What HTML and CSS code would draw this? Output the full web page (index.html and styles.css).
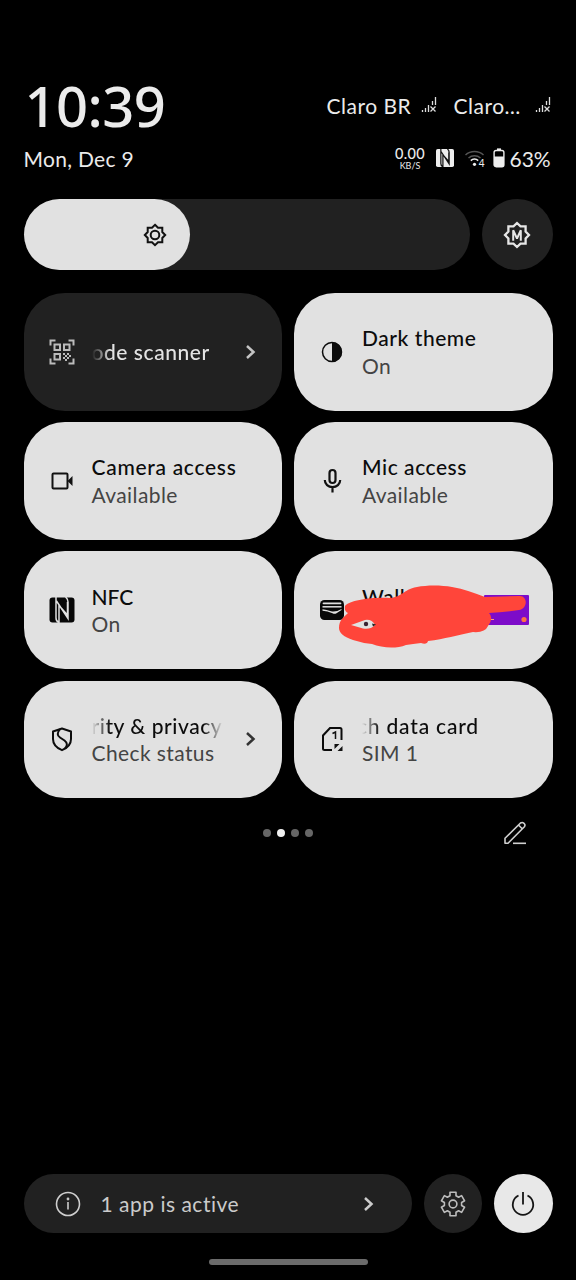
FILE: index.html
```html
<!DOCTYPE html>
<html lang="en">
<head>
<meta charset="utf-8">
<title>Quick settings</title>
<link rel="stylesheet" href="styles.css">
</head>
<body>
<main class="panel">
  <header class="status">
    <div class="status-top">
      <div class="clock">10:39</div>
      <div class="carriers">
        <span class="carrier">Claro BR</span>
        <svg class="signal" width="16" height="18" viewBox="0 0 16 18"><path d="M1.500 14v2M4.500 12v4M7.500 9v7M11.500 5v4M14.500 1v8" stroke="#ddd" stroke-width="1.300"/><path d="M9.500 10.500l5 5M14.500 10.500l-5 5" stroke="#ddd" stroke-width="1.300"/></svg>
        <span class="carrier carrier-second">Claro…</span>
        <svg class="signal signal-second" width="16" height="18" viewBox="0 0 16 18"><path d="M1.500 14v2M4.500 12v4M7.500 9v7M11.500 5v4M14.500 1v8" stroke="#ddd" stroke-width="1.300"/><path d="M9.500 10.500l5 5M14.500 10.500l-5 5" stroke="#ddd" stroke-width="1.300"/></svg>
      </div>
    </div>
    <div class="status-bottom">
      <div class="date">Mon, Dec 9</div>
      <div class="indicators">
        <div class="speed"><span class="rate">0.00</span><span class="unit">KB/S</span></div>
        <svg class="ind-nfc" width="18" height="18" viewBox="0 0 26 26"><rect width="26" height="26" rx="2.500" fill="#eee"/><path d="M7 0v21q0 3.500 3 4.500V8.500l8.500 9.500V5M7.500 4l11.500 17.500V5q0-3-2.500-5" fill="none" stroke="#111" stroke-width="1.800"/></svg>
        <svg class="ind-wifi" width="22" height="18" viewBox="0 0 22 18"><path d="M1.500 6a13.500 13.500 0 0 1 18 0M4.500 9a9 9 0 0 1 12 0" fill="none" stroke="#555" stroke-width="1.500"/><path d="M6.800 11.600a5.500 5.500 0 0 1 7.400 0" fill="none" stroke="#eee" stroke-width="1.600"/><circle cx="10.500" cy="15.300" r="1.600" fill="#eee"/><text class="wifi-gen" x="14.700" y="17.500">4</text></svg>
        <svg class="ind-battery" width="12" height="20" viewBox="0 0 12 20"><path d="M4 1.200h4" stroke="#eee" stroke-width="1.600"/><rect x="1.100" y="2.500" width="9.800" height="16.200" rx="2" fill="none" stroke="#eee" stroke-width="1.400"/><path d="M1 8.500h10V17q0 2-2 2H3q-2 0-2-2z" fill="#eee"/></svg>
        <span class="percent">63%</span>
      </div>
    </div>
  </header>

  <section class="brightness">
    <div class="slider">
      <div class="slider-fill">
        <svg width="24" height="24" viewBox="-12 -12 24 24" fill="none" stroke="#111" stroke-width="2"><path d="M0-10.200 3-7.300H7.300V-3L10.200 0 7.300 3V7.300H3L0 10.200-3 7.300H-7.300V3L-10.200 0-7.300-3V-7.300H-3Z"/><circle r="4.300"/></svg>
      </div>
    </div>
    <div class="mode">
      <svg width="28" height="28" viewBox="-14 -14 28 28" fill="none" stroke="#e6e6e6" stroke-width="2.300"><path d="M0-12 3.500-8.600H8.600V-3.500L12 0 8.600 3.500V8.600H3.500L0 12-3.500 8.600H-8.600V3.500L-12 0-8.600-3.500V-8.600H-3.500Z"/><path d="M-3.800 5.700V-4.800L0 3.500 3.800-4.800V5.700" stroke-width="2" stroke-linejoin="bevel"/></svg>
    </div>
  </section>

  <section class="tiles">
    <article class="tile tile-off">
      <svg class="icon" viewBox="0 0 26 26" fill="none" stroke="#bcbcbc" stroke-width="2"><path d="M1.500 6.500v-5h5M19.500 1.500h5v5M24.500 19.500v5h-5M6.500 24.500h-5v-5"/><path d="M5.500 5.500h5.500v5.500H5.500zM15 5.500h5.500v5.500H15zM5.500 15h5.500v5.500H5.500z" stroke-width="2"/><path d="M14 15h2m2 0h2m-4 2h2m2 0h2m-8 2h2m2 0h2m-4 2h2" stroke-width="1.800"/></svg>
      <div class="label"><div class="title fade-start">ode scanner</div></div>
      <svg class="chevron" viewBox="0 0 12 16"><path d="M2 2l6.500 6L2 14" fill="none" stroke="#c4c4c4" stroke-width="2.500"/></svg>
    </article>
    <article class="tile">
      <svg class="icon" viewBox="0 0 26 26"><circle cx="13" cy="13" r="9.500" fill="none" stroke="#0c0c0c" stroke-width="1.500"/><path d="M13 3a10 10 0 0 1 0 20z" fill="#0c0c0c"/></svg>
      <div class="label"><div class="title">Dark theme</div><div class="sub">On</div></div>
    </article>
    <article class="tile">
      <svg class="icon" viewBox="0 0 26 26"><rect x="3.500" y="5.500" width="15" height="15" rx="1" fill="none" stroke="#111" stroke-width="2"/><path d="M18.500 13 23.500 8v10z" fill="#111"/></svg>
      <div class="label"><div class="title title-wide">Camera access</div><div class="sub">Available</div></div>
    </article>
    <article class="tile">
      <svg class="icon" viewBox="0 0 26 26" fill="none" stroke="#111" stroke-width="2.200"><rect x="10.500" y="2" width="6" height="13" rx="3"/><path d="M5.800 12a7.700 7.200 0 0 0 15.400 0M13.500 19.500v5"/></svg>
      <div class="label"><div class="title">Mic access</div><div class="sub">Available</div></div>
    </article>
    <article class="tile">
      <svg class="icon" viewBox="0 0 26 26"><rect x=".5" y=".5" width="25" height="25" rx="3" fill="#080808"/><path d="M7 0v21q0 3.500 3 4.500V8.500l8.500 9.500V5M7.500 4l11.500 17.500V5q0-3-2.500-5" fill="none" stroke="#e1e1e1" stroke-width="1.500"/></svg>
      <div class="label"><div class="title title-tight">NFC</div><div class="sub">On</div></div>
    </article>
    <article class="tile wallet">
      <svg class="icon" viewBox="0 0 26 26"><rect x="1" y="3" width="24" height="20" rx="4.500" fill="#080808"/><path d="M4.500 6.300h17" stroke="#e1e1e1" stroke-width="1.800" stroke-linecap="round"/><path d="M3.500 9.800h19" stroke="#e1e1e1" stroke-width="1.500"/><path d="M3.500 12.300q4 .5 8.500 2 5 1 10.500-2.300v1l-5 3.200q-2 1-4 0-5-2.500-10-2.500z" fill="#e1e1e1"/></svg>
      <div class="label"><div class="title">Wallet</div><div class="sub">&nbsp;</div></div>
      <svg class="scribble" width="200" height="70" viewBox="335 580 200 70"><rect x="484" y="595" width="45" height="30" rx="1" fill="#7d0cc9"/><circle cx="524" cy="619.500" r="2.600" fill="#ff7043"/><path d="M489 619.500h5" stroke="#ff9b78"/><path d="M345 606C350 600 372 597 390 598C403 597 402 590 417 587C427 585 441 585 452 587C464 589 474 593 485 597L519 596C528 595 528 609 519 610Q505 612 489 613Q494 618 488 626Q485 633 473 632C457 635 445 639 428 641Q427 645 421 643Q413 644 406 645C396 649 382 648 372 644Q362 643 353 640C344 637 339 633 339 628C339 620 344 617 348 613Q344 611 345 606Z" fill="#ff453a"/><path d="M351 625 365 620q7-1 10 5-5 5-12 3.500z" fill="#e1e1e1"/><circle cx="366" cy="624" r="2.200" fill="#392333"/><path d="M372 623.500l4 1-3 2" fill="#222"/></svg>
    </article>
    <article class="tile">
      <svg class="icon" viewBox="0 0 26 26" fill="none" stroke="#0c0c0c" stroke-width="2" stroke-linejoin="round"><path d="M13 2.500 22 5.500V13q0 7.500-9 11.200Q4 20.500 4 13V5.500Z"/><path d="M11 3.200Q6.500 8.500 11 11.500l4.500 3Q20 18 16 22.500"/></svg>
      <div class="label"><div class="title fade-both">rity &amp; privacy</div><div class="sub">Check status</div></div>
      <svg class="chevron" viewBox="0 0 12 16"><path d="M2 2l6.500 6L2 14" fill="none" stroke="#333" stroke-width="2.500"/></svg>
    </article>
    <article class="tile">
      <svg class="icon" viewBox="0 0 26 26"><path d="M13 24H5.500Q4 24 4 22.500V9.500L11 2h10q1.500 0 1.500 1.500V14" fill="none" stroke="#0c0c0c" stroke-width="2"/><path d="M13.500 7.500 16.500 6v7" fill="none" stroke="#111" stroke-width="1.500"/><path d="M15.500 18h5l-5 5zM23.500 20v5h-5z" fill="#111"/></svg>
      <div class="label"><div class="title fade-start"><span class="scrolled">ch data card</span></div><div class="sub">SIM 1</div></div>
    </article>
  </section>

  <nav class="pager">
    <span class="dots"><i class="dot"></i><i class="dot dot-on"></i><i class="dot"></i><i class="dot"></i></span>
    <svg class="edit" width="24" height="24" viewBox="0 0 24 24" fill="none" stroke="#d0d0d0" stroke-width="1.600" stroke-linejoin="round"><path d="M2 22.300v-5L17.500 2q1.800-1.200 3.500.3t.4 3.400L6 21.300 5 22.300ZM15.500 4l4.200 4.200"/><path d="M10 22.300h13"/></svg>
  </nav>

  <footer class="footer">
    <div class="active-apps">
      <svg width="26" height="26" viewBox="0 0 26 26" fill="none" stroke="#cfcfcf" stroke-width="1.600"><circle cx="13" cy="13" r="11.500"/><path d="M13 11v7.500"/><circle cx="13" cy="8" r=".6"/></svg>
      <span class="active-text">1 app is active</span>
      <svg class="chevron" viewBox="0 0 12 16"><path d="M2 2l6.500 6L2 14" fill="none" stroke="#ccc" stroke-width="2.500"/></svg>
    </div>
    <div class="round">
      <svg width="28" height="28" viewBox="-14 -14 28 28" fill="none" stroke="#bdbdbd" stroke-width="1.600" stroke-linejoin="round"><path d="M-3-8.200V-11.700H3V-8.200L5.600-6.700 8.600-8.400 11.600-3.200 8.600-1.500V1.500L11.600 3.200 8.600 8.400 5.600 6.700 3 8.200V11.700H-3V8.200L-5.600 6.700-8.600 8.400-11.600 3.200-8.600 1.500V-1.500L-11.600-3.200-8.600-8.400-5.600-6.700Z"/><circle r="3.900"/></svg>
    </div>
    <div class="round round-light">
      <svg width="26" height="26" viewBox="0 0 26 26" fill="none" stroke="#151515" stroke-width="1.800"><path d="M8.500 4.500a10.200 10.200 0 1 0 9 0M13 1v12.500"/></svg>
    </div>
  </footer>
  <div class="home-bar"></div>
</main>
</body>
</html>
```
FILE: styles.css
```css
* { box-sizing: border-box; }
body {
  margin: 0;
  background: #000;
  color: #ebebeb;
  font-family: Lato, "Noto Sans", sans-serif;
}
svg { display: block; flex: none; }
.panel {
  width: 576px;
  height: 1280px;
  padding: 75px 23.500px 0;
  display: flex;
  flex-direction: column;
  overflow: hidden;
}
.status { height: 124px; }
.status-top {
  height: 62px;
  display: flex;
  justify-content: space-between;
}
.clock {
  font: 500 56px/60px "Noto Sans", sans-serif;
  letter-spacing: -0.500px;
  padding-left: 1px;
}
.carriers {
  display: flex;
  height: 60px;
  align-items: center;
}
.carrier {
  font-size: 21px;
  letter-spacing: 0.500px;
  width: 86px;
  margin-right: 8px;
  white-space: nowrap;
}
.carrier-second { width: 72px; margin: 0 9px 0 17px; }
.signal-second { margin-right: 2px; }
.status-bottom {
  height: 42px;
  display: flex;
  justify-content: space-between;
  align-items: center;
}
.date { font-size: 21px; letter-spacing: 0.300px; }
.indicators { display: flex; align-items: center; }
.speed {
  display: flex;
  flex-direction: column;
  align-items: center;
  width: 31px;
  margin-right: 10px;
}
.rate { font-size: 14.500px; line-height: 14px; letter-spacing: 0.300px; font-weight: 500; }
.unit { font-size: 9px; line-height: 9px; }
.ind-nfc { margin-right: 10px; }
.ind-wifi { margin-right: 7px; }
.ind-battery { margin-right: 5px; }
.wifi-gen { font: 10px "Noto Sans", sans-serif; fill: #eee; }
.percent { font-size: 21px; width: 43px; }

.brightness { display: flex; gap: 12px; height: 94px; }
.slider {
  width: 446.500px;
  height: 71px;
  border-radius: 36px;
  background: #212121;
}
.slider-fill {
  width: 166px;
  height: 71px;
  border-radius: 36px;
  background: #e1e1e1;
  display: flex;
  align-items: center;
  justify-content: flex-end;
  padding-right: 23px;
}
.mode {
  width: 70.500px;
  height: 71px;
  border-radius: 50%;
  background: #212121;
  display: flex;
  align-items: center;
  justify-content: center;
}

.tiles {
  display: grid;
  grid-template-columns: 258.500px 258.500px;
  grid-auto-rows: 117.500px;
  gap: 11.700px 12px;
}
.tile {
  position: relative;
  display: flex;
  align-items: center;
  padding: 0 25px;
  border-radius: 41px;
  background: #e1e1e1;
  color: #0c0c0c;
}
.tile-off { background: #212121; color: #e3e3e3; }
.icon { width: 26px; height: 26px; margin-right: 17px; }
.label { flex: 1; min-width: 0; }
.title, .sub {
  font-size: 21px;
  line-height: 27.500px;
  white-space: nowrap;
}
.title { font-weight: 500; letter-spacing: 0.550px; }
.title-wide { letter-spacing: 0.700px; }
.title-tight { letter-spacing: 0; }
.sub { color: #444; letter-spacing: 0.400px; }
.fade-start, .fade-both { width: 131px; }
.fade-start { -webkit-mask-image: linear-gradient(90deg, transparent, #000 18px); mask-image: linear-gradient(90deg, transparent, #000 18px); }
.fade-both { -webkit-mask-image: linear-gradient(90deg, transparent, #000 18px, #000 111px, transparent); mask-image: linear-gradient(90deg, transparent, #000 18px, #000 111px, transparent); }
.scrolled { margin-left: -5px; letter-spacing: 0.800px; }
.chevron { width: 12px; height: 16px; }
.scribble { position: absolute; left: 41px; top: 28.500px; }

.pager {
  height: 70px;
  display: grid;
  grid-template-columns: 1fr auto 1fr;
  align-items: center;
}
.dots { grid-column: 2; display: flex; gap: 6px; }
.dot { width: 8px; height: 8px; border-radius: 50%; background: #666; }
.dot-on { background: #f0f0f0; }
.edit { justify-self: end; margin-right: 26px; }

.footer {
  margin-top: 306px;
  display: flex;
  gap: 12px;
  height: 59px;
}
.active-apps {
  width: 388.500px;
  border-radius: 30px;
  background: #212121;
  display: flex;
  align-items: center;
  padding: 0 37px 0 31px;
}
.active-text { flex: 1; margin-left: 20px; font-size: 21px; letter-spacing: 0.500px; color: #cbcbcb; }
.round {
  width: 58.500px;
  border-radius: 50%;
  background: #212121;
  display: flex;
  align-items: center;
  justify-content: center;
}
.round-light { background: #e8e8e8; }
.home-bar {
  align-self: center;
  width: 159px;
  height: 6px;
  margin-top: 26px;
  border-radius: 3px;
  background: #6b6b6b;
}
```
